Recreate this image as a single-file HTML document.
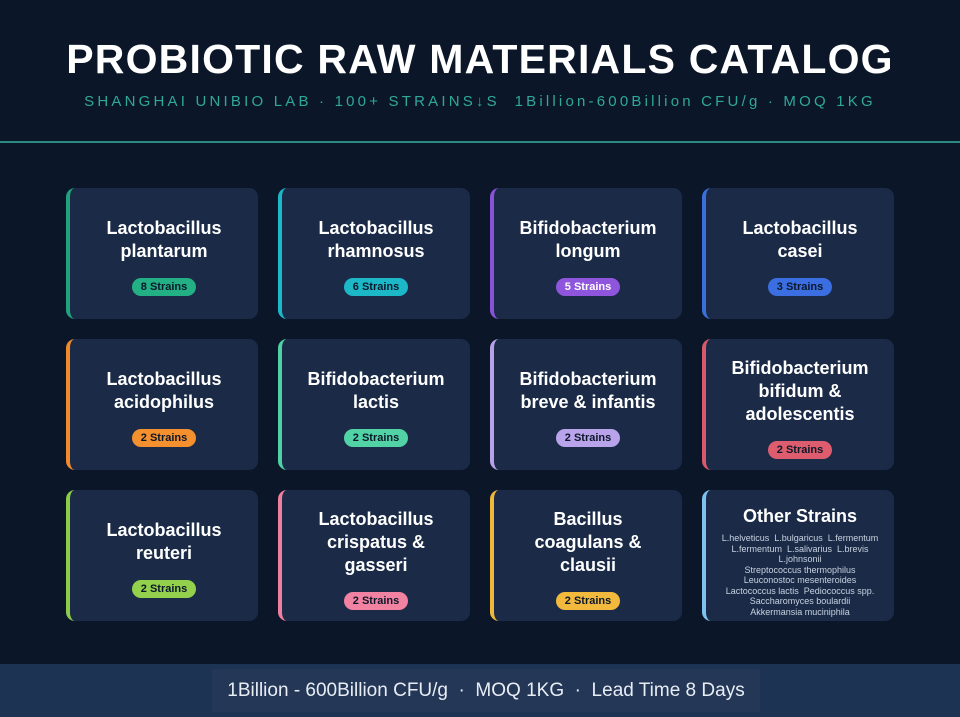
<!DOCTYPE html>
<html><head><style>
*{margin:0;padding:0;box-sizing:border-box}
body{width:960px;height:717px;background:#0b1729;font-family:"Liberation Sans",sans-serif;position:relative;overflow:hidden;color:#fff}
h1{position:absolute;top:36px;left:0;width:960px;text-align:center;font-size:41px;font-weight:bold;letter-spacing:1.2px}
.sub{position:absolute;top:93px;left:0;width:960px;text-align:center;color:#2fa89a;font-size:15px;letter-spacing:3.2px}
.line{position:absolute;top:141px;left:0;width:960px;height:2px;background:#2b8a84}
.card{position:absolute;width:192px;height:131px;background:#1a2a47;border-radius:9px;border-left:4px solid;display:flex;flex-direction:column;align-items:center;justify-content:center;text-align:center;padding-top:6px}
.t{font-weight:bold;font-size:18px;line-height:23px}
.b{margin-top:15px;font-size:11px;font-weight:bold;color:#0b1729;padding:3px 9px;border-radius:10px}
.o{font-size:9px;line-height:10.5px;color:#c8d2e0}
.foot{position:absolute;top:664px;left:0;width:960px;height:53px;background:#1d3354}
.fi{position:absolute;top:669px;left:212px;width:548px;height:43px;background:#243757;text-align:center;line-height:43px;font-size:19px;color:#e8edf4}
</style></head><body>
<h1>PROBIOTIC RAW MATERIALS CATALOG</h1>
<div class="sub">SHANGHAI UNIBIO LAB · 100+ STRAINS↓S &nbsp;1Billion-600Billion CFU/g · MOQ 1KG</div>
<div class="line"></div>

<div class="card" style="left:66px;top:188px;border-color:#1fa27d"><div class="t">Lactobacillus<br>plantarum</div><div class="b" style="background:#22b084">8 Strains</div></div>
<div class="card" style="left:278px;top:188px;border-color:#1bb8c9"><div class="t">Lactobacillus<br>rhamnosus</div><div class="b" style="background:#1cb8c8">6 Strains</div></div>
<div class="card" style="left:490px;top:188px;border-color:#8a52d8"><div class="t">Bifidobacterium<br>longum</div><div class="b" style="background:#8f55dc;color:#fff">5 Strains</div></div>
<div class="card" style="left:702px;top:188px;border-color:#3a6fdc"><div class="t">Lactobacillus<br>casei</div><div class="b" style="background:#3b6ee0">3 Strains</div></div>

<div class="card" style="left:66px;top:339px;border-color:#f08a2c"><div class="t">Lactobacillus<br>acidophilus</div><div class="b" style="background:#f5902e">2 Strains</div></div>
<div class="card" style="left:278px;top:339px;border-color:#4fd1a5"><div class="t">Bifidobacterium<br>lactis</div><div class="b" style="background:#52d3a6">2 Strains</div></div>
<div class="card" style="left:490px;top:339px;border-color:#b8a0e8"><div class="t">Bifidobacterium<br>breve &amp; infantis</div><div class="b" style="background:#b9a3ea">2 Strains</div></div>
<div class="card" style="left:702px;top:339px;border-color:#d85a6a"><div class="t">Bifidobacterium<br>bifidum &amp;<br>adolescentis</div><div class="b" style="background:#dd5d6e">2 Strains</div></div>

<div class="card" style="left:66px;top:490px;border-color:#8ccc4a"><div class="t">Lactobacillus<br>reuteri</div><div class="b" style="background:#93d14c">2 Strains</div></div>
<div class="card" style="left:278px;top:490px;border-color:#ef7fa0"><div class="t">Lactobacillus<br>crispatus &amp;<br>gasseri</div><div class="b" style="background:#f282a2">2 Strains</div></div>
<div class="card" style="left:490px;top:490px;border-color:#f0b83a"><div class="t">Bacillus<br>coagulans &amp;<br>clausii</div><div class="b" style="background:#f2b93c">2 Strains</div></div>
<div class="card" style="left:702px;top:490px;border-color:#7ec0ee;justify-content:flex-start;padding-top:15px"><div class="t" style="margin-bottom:5px">Other Strains</div><div class="o">L.helveticus &nbsp;L.bulgaricus &nbsp;L.fermentum<br>L.fermentum &nbsp;L.salivarius &nbsp;L.brevis<br>L.johnsonii<br>Streptococcus thermophilus<br>Leuconostoc mesenteroides<br>Lactococcus lactis &nbsp;Pediococcus spp.<br>Saccharomyces boulardii<br>Akkermansia muciniphila</div></div>

<div class="foot"></div>
<div class="fi">1Billion - 600Billion CFU/g &nbsp;· &nbsp;MOQ 1KG &nbsp;· &nbsp;Lead Time 8 Days</div>
</body></html>
